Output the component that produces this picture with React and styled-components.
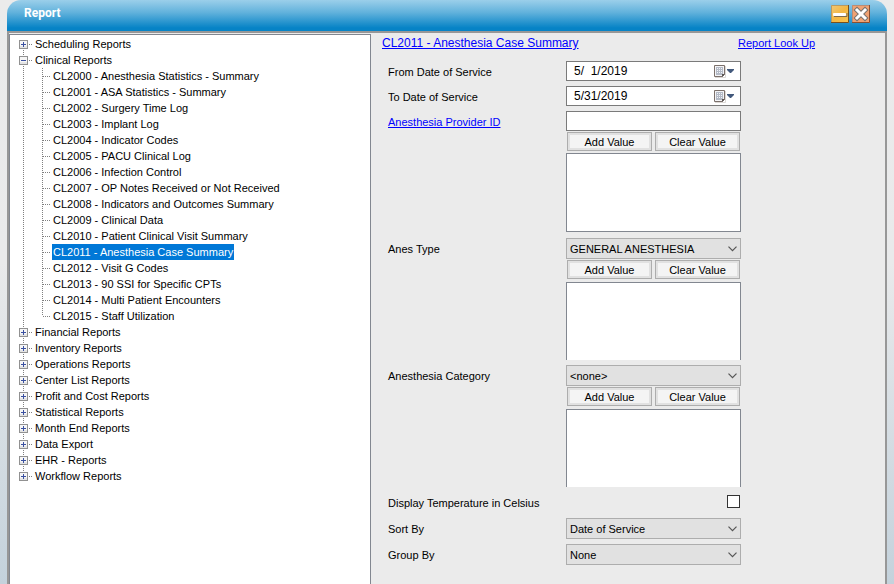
import React, { useState } from "react";
import styled, { createGlobalStyle, css } from "styled-components";

const Global = createGlobalStyle`
  *, *::before, *::after { box-sizing: border-box; }
  html, body, #root { height: 100%; }
  body {
    margin: 0;
    overflow: hidden;
    background: linear-gradient(#ebebeb 0%, #e9eaeb 45%, #c4d2dc 100%);
    color: #000;
    font: 11px/16px "Liberation Sans", Arial, sans-serif;
  }
  button, input, select { font: inherit; color: inherit; }
`;

const Window = styled.div`
  display: flex;
  flex-direction: column;
  height: 100%;
  margin: 0 7px;
`;

const TitleBar = styled.header`
  display: flex;
  flex: none;
  align-items: flex-start;
  gap: 3px;
  height: 31px;
  padding: 5px 17px 0;
  border-radius: 14px 14px 0 0;
  background: linear-gradient(#9bcfea 0%, #62b2dc 40%, #0683c6 90%, #0683c6 100%);
`;

const Title = styled.h1`
  flex: 1;
  margin: 0;
  color: #fff;
  font: bold 12px/16px "Roboto", "Liberation Sans", sans-serif;
`;

const WindowButton = styled.button`
  display: block;
  width: 18px;
  height: 18px;
  padding: 0;
  border: 0;
  background: none;

  svg { display: block; }
`;

const Body = styled.main`
  display: flex;
  flex: 1;
  min-height: 0;
  border: solid #979797;
  border-width: 2px 2px 0;
  background: #ebebeb;
`;

const TreePane = styled.nav`
  flex: 0 0 362px;
  margin-top: 1px;
  border: 1px solid #828790;
  border-bottom: 0;
  background: #fff;
`;

const TreeList = styled.ul`
  margin: 0;
  padding: 1px 0 0;
  list-style: none;
`;

const ChildList = styled.ul`
  margin: 0;
  padding: 0;
  list-style: none;
`;

const dotsDown = "repeating-linear-gradient(#808080 0 1px, transparent 1px 2px)";
const dotsAcross = "repeating-linear-gradient(90deg, #808080 0 1px, transparent 1px 2px)";

const Branch = styled.li`
  background: ${dotsDown} no-repeat 13px 0 / 1px 100%;

  &:first-child { background-position: 13px 8px; }
  &:last-child { background-size: 1px 8px; }
`;

const BranchRow = styled.div`
  display: flex;
  align-items: center;
  height: 16px;
  padding-left: 9px;
  background: ${dotsAcross} no-repeat 19px 8px / 4px 1px;
`;

const Toggle = styled.button`
  width: 9px;
  height: 9px;
  margin-right: 6px;
  padding: 0;
  border: 0;
  background: #fff;

  svg { display: block; }
`;

const Leaf = styled.li`
  display: flex;
  height: 16px;
  padding-left: 42px;
  background:
    ${dotsDown} no-repeat 32px 0 / 1px 100%,
    ${dotsAcross} no-repeat 33px 8px / 8px 1px;

  &:last-child {
    background-size: 1px 8px, 8px 1px;
  }
`;

const NodeLabel = styled.button`
  height: 16px;
  padding: 0 1px;
  border: 0;
  background: none;
  line-height: 16px;
  white-space: nowrap;

  ${(p) => p.$selected && css`
    background: #0078d7;
    color: #fff;
  `}
`;

const FormPane = styled.form`
  flex: 1;
  min-width: 0;
  padding: 2px 8px 0 11px;
`;

const FormHeader = styled.div`
  display: grid;
  grid-template-columns: 356px auto;
  margin-bottom: 10px;
  font-size: 12px;
  white-space: nowrap;
`;

const Link = styled.a`
  color: #0000ff;
  text-decoration: underline;
`;

const SmallLink = styled(Link)`
  font-size: 11px;
`;

const Field = styled.div`
  display: grid;
  grid-template-columns: 178px 175px;
  align-items: start;
  margin: 0 0 ${(p) => p.$gap || 5}px 6px;
`;

const FieldLabel = styled.label`
  padding-top: 3px;
`;

const inputBox = css`
  width: 100%;
  height: 20px;
  border: 1px solid #7a7a7a;
  background: #fff;
`;

const TextBox = styled.input`
  ${inputBox}
  display: block;
  padding: 0 4px;
`;

const DateBox = styled.div`
  ${inputBox}
  display: flex;
  align-items: center;
`;

const DateInput = styled.input`
  flex: 1;
  min-width: 0;
  padding: 0 0 0 7px;
  border: 0;
  background: none;
  font-size: 12px;
  line-height: 18px;
  white-space: pre;
  outline: none;
`;

const CalendarButton = styled.button`
  flex: none;
  width: 27px;
  height: 18px;
  padding: 0;
  border: 0;
  background: none;

  svg { display: block; }
`;

const SelectWrap = styled.div`
  display: grid;
  align-items: center;

  > * { grid-area: 1 / 1; }
  > svg { justify-self: end; margin-right: 4px; pointer-events: none; }
`;

const SelectBox = styled.select`
  width: 100%;
  height: 21px;
  padding: 0 20px 0 3px;
  border: 1px solid #adadad;
  border-radius: 0;
  background: #e1e1e1;
  appearance: none;
`;

const ButtonRow = styled.div`
  display: grid;
  grid-template-columns: 1fr 1fr;
  gap: 3px;
  margin: 1px 0 ${(p) => (p.$tight ? 2 : 3)}px;
  padding: 0 1px;
`;

const ValueButton = styled.button`
  height: 19px;
  padding: 0;
  border: 1px solid #adadad;
  box-shadow: inset 0 0 0 2px #e1e1e1;
  background: #f4f4f4;
  line-height: 18px;
`;

const ValueList = styled.div`
  height: ${(p) => (p.$closed ? 79 : 78)}px;
  border: 1px solid #828790;
  ${(p) => !p.$closed && "border-bottom: 0;"}
  background: #fff;
`;

const CheckBox = styled.input`
  justify-self: end;
  width: 13px;
  height: 13px;
  margin: 0 1px 0 0;
  border: 1px solid #333;
  background: #fff;
  appearance: none;

  &:checked { background: #0078d7; }
`;

const clinical = [
  "CL2000 - Anesthesia Statistics - Summary",
  "CL2001 - ASA Statistics - Summary",
  "CL2002 - Surgery Time Log",
  "CL2003 - Implant Log",
  "CL2004 - Indicator Codes",
  "CL2005 - PACU Clinical Log",
  "CL2006 - Infection Control",
  "CL2007 - OP Notes Received or Not Received",
  "CL2008 - Indicators and Outcomes Summary",
  "CL2009 - Clinical Data",
  "CL2010 - Patient Clinical Visit Summary",
  "CL2011 - Anesthesia Case Summary",
  "CL2012 - Visit G Codes",
  "CL2013 - 90 SSI for Specific CPTs",
  "CL2014 - Multi Patient Encounters",
  "CL2015 - Staff Utilization",
];

const tree = [
  { name: "Scheduling Reports" },
  { name: "Clinical Reports", items: clinical },
  { name: "Financial Reports" },
  { name: "Inventory Reports" },
  { name: "Operations Reports" },
  { name: "Center List Reports" },
  { name: "Profit and Cost Reports" },
  { name: "Statistical Reports" },
  { name: "Month End Reports" },
  { name: "Data Export" },
  { name: "EHR - Reports" },
  { name: "Workflow Reports" },
];

function ToggleIcon({ open }) {
  return (
    <svg width="9" height="9" viewBox="0 0 9 9" shapeRendering="crispEdges">
      <rect x="0.5" y="0.5" width="8" height="8" fill="#f6f6f6" stroke="#919191" />
      <path d="M1 6h7v2H1z" fill="#e4e4e4" />
      <path d={open ? "M2 4h5v1H2z" : "M2 4h5v1H2zM4 2h1v5H4z"} fill="#3a50a0" />
    </svg>
  );
}

function MinimizeIcon() {
  return (
    <svg width="18" height="18" viewBox="0 0 18 18">
      <defs>
        <linearGradient id="gold" x1="0" y1="0" x2="1" y2="1">
          <stop offset="0" stopColor="#f0c878" />
          <stop offset="0.5" stopColor="#f3b742" />
          <stop offset="1" stopColor="#f9c550" />
        </linearGradient>
      </defs>
      <rect width="18" height="18" fill="url(#gold)" />
      <path d="M0.5 17V0.5H17" fill="none" stroke="#b99a62" />
      <path d="M17.5 0V17.5H0" fill="none" stroke="#77501d" />
      <path d="M3 11.5h13V8" fill="none" stroke="#7d6a4c" />
      <rect x="2" y="8" width="13" height="3" rx="1" fill="#fff" />
    </svg>
  );
}

function CloseIcon() {
  return (
    <svg width="18" height="18" viewBox="0 0 18 18">
      <rect width="18" height="18" fill="#f0a273" />
      <path d="M0.5 17V0.5H17" fill="none" stroke="#ba8d77" />
      <path d="M17.5 0V17.5H0" fill="none" stroke="#894f31" />
      <path d="M5 5l8 8M13 5l-8 8" stroke="#77736f" strokeWidth="5" strokeLinecap="square" />
      <path d="M5 5l8 8M13 5l-8 8" stroke="#fff" strokeWidth="3" strokeLinecap="square" />
    </svg>
  );
}

function CalendarIcon() {
  return (
    <svg width="27" height="18" viewBox="0 0 27 18">
      <path d="M2 15.5h10.5V4" fill="none" stroke="#dcd8d5" />
      <path d="M1.5 3.5h10v9l-2 2h-8z" fill="#f4f4f6" stroke="#7b706b" />
      <path d="M3 5h7v8H3z" fill="#b4bac6" />
      <path d="M4 6h1v1H4zM6 6h1v1H6zM8 6h1v1H8zM4 8h1v1H4zM6 8h1v1H6zM8 8h1v1H8zM4 10h1v1H4zM6 10h1v1H6zM8 10h1v1H8z" fill="#f2f4f8" />
      <path d="M9 15v-3h3z" fill="#5b5552" />
      <path d="M14 7h7v1l-3 3h-1l-3-3z" fill="#42597c" />
    </svg>
  );
}

function ChevronIcon() {
  return (
    <svg width="9" height="6" viewBox="0 0 9 6" fill="none" stroke="#555" strokeWidth="1.2">
      <path d="M0.5 0.7l4 4l4-4" />
    </svg>
  );
}

function DateField({ id, label, value }) {
  return (
    <Field>
      <FieldLabel htmlFor={id}>{label}</FieldLabel>
      <DateBox>
        <DateInput id={id} defaultValue={value} />
        <CalendarButton type="button" aria-label={`Choose ${label}`}>
          <CalendarIcon />
        </CalendarButton>
      </DateBox>
    </Field>
  );
}

function Select({ id, options }) {
  return (
    <SelectWrap>
      <SelectBox id={id}>
        {options.map((o) => <option key={o}>{o}</option>)}
      </SelectBox>
      <ChevronIcon />
    </SelectWrap>
  );
}

function ValuePicker({ label, closed, children }) {
  return (
    <div>
      {children}
      <ButtonRow $tight={closed}>
        <ValueButton type="button">Add Value</ValueButton>
        <ValueButton type="button">Clear Value</ValueButton>
      </ButtonRow>
      <ValueList role="listbox" aria-label={label} $closed={closed} />
    </div>
  );
}

function ReportTree() {
  const [open, setOpen] = useState({ "Clinical Reports": true });
  const [selected, setSelected] = useState("CL2011 - Anesthesia Case Summary");

  return (
    <TreePane aria-label="Reports">
      <TreeList>
        {tree.map(({ name, items }) => (
          <Branch key={name}>
            <BranchRow>
              <Toggle
                aria-label={`Toggle ${name}`}
                aria-expanded={!!open[name]}
                onClick={() => setOpen({ ...open, [name]: !open[name] })}
              >
                <ToggleIcon open={open[name]} />
              </Toggle>
              <NodeLabel $selected={selected === name} onClick={() => setSelected(name)}>
                {name}
              </NodeLabel>
            </BranchRow>
            {items && open[name] && (
              <ChildList>
                {items.map((item) => (
                  <Leaf key={item}>
                    <NodeLabel $selected={selected === item} onClick={() => setSelected(item)}>
                      {item}
                    </NodeLabel>
                  </Leaf>
                ))}
              </ChildList>
            )}
          </Branch>
        ))}
      </TreeList>
    </TreePane>
  );
}

export default function App() {
  return (
    <>
      <Global />
      <Window>
        <TitleBar>
          <Title>Report</Title>
          <WindowButton aria-label="Minimize"><MinimizeIcon /></WindowButton>
          <WindowButton aria-label="Close"><CloseIcon /></WindowButton>
        </TitleBar>
        <Body>
          <ReportTree />
          <FormPane onSubmit={(e) => e.preventDefault()}>
            <FormHeader>
              <div><Link href="#report">CL2011 - Anesthesia Case Summary</Link></div>
              <div><SmallLink href="#lookup">Report Look Up</SmallLink></div>
            </FormHeader>
            <DateField id="from" label="From Date of Service" value="5/  1/2019" />
            <DateField id="to" label="To Date of Service" value="5/31/2019" />
            <Field $gap={6}>
              <FieldLabel as="div">
                <SmallLink href="#provider" id="provider-label">Anesthesia Provider ID</SmallLink>
              </FieldLabel>
              <ValuePicker label="Provider values" closed>
                <TextBox aria-labelledby="provider-label" />
              </ValuePicker>
            </Field>
            <Field>
              <FieldLabel htmlFor="type">Anes Type</FieldLabel>
              <ValuePicker label="Anes Type values">
                <Select id="type" options={["GENERAL ANESTHESIA"]} />
              </ValuePicker>
            </Field>
            <Field $gap={8}>
              <FieldLabel htmlFor="category">Anesthesia Category</FieldLabel>
              <ValuePicker label="Anesthesia Category values">
                <Select id="category" options={["<none>"]} />
              </ValuePicker>
            </Field>
            <Field $gap={7}>
              <label htmlFor="celsius">Display Temperature in Celsius</label>
              <CheckBox id="celsius" type="checkbox" />
            </Field>
            <Field>
              <FieldLabel htmlFor="sort">Sort By</FieldLabel>
              <Select id="sort" options={["Date of Service"]} />
            </Field>
            <Field>
              <FieldLabel htmlFor="group">Group By</FieldLabel>
              <Select id="group" options={["None"]} />
            </Field>
          </FormPane>
        </Body>
      </Window>
    </>
  );
}
